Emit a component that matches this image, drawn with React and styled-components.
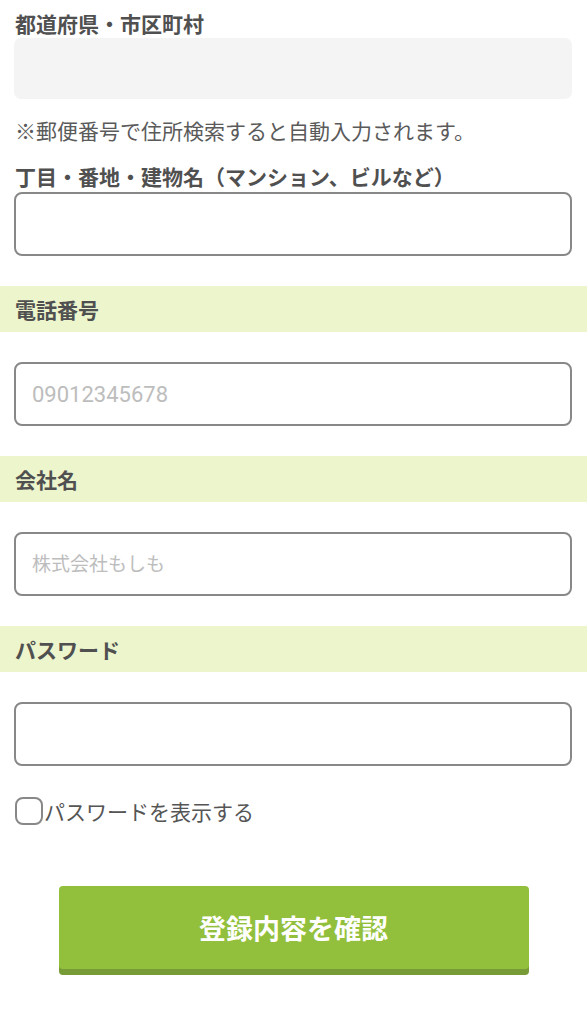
import styled, { createGlobalStyle } from "styled-components";

const GlobalStyle = createGlobalStyle`
  body {
    margin: 0;
    background: #fff;
    font-family: "Noto Sans CJK JP", "Noto Sans", sans-serif;
    color: #505050;
  }
`;

const Form = styled.form`
  display: flex;
  flex-direction: column;
  padding: 10px 0 48px;
`;

const Field = styled.div`
  display: flex;
  flex-direction: column;
  padding: 0 15px 0 14px;
  margin-top: ${(p) => p.$top || 0}px;
`;

const Label = styled.label`
  font-size: 21px;
  font-weight: 700;
  line-height: 26px;
  color: #505050;
  padding-left: 1px;
  margin-bottom: ${(p) => p.$gap || 0}px;
`;

const ReadonlyBox = styled.div`
  height: 61px;
  background: #f4f4f4;
  border-radius: 7px;
`;

const Note = styled.p`
  margin: 18px 0 0;
  padding-left: 1px;
  font-size: 21px;
  line-height: 26px;
  color: #5a5a5a;
`;

const Band = styled.div`
  display: flex;
  align-items: center;
  height: 46px;
  margin-top: 30px;
  padding-left: 15px;
  background: #edf5cc;
  font-size: 21px;
  font-weight: 700;
  color: #505050;
`;

const Input = styled.input`
  box-sizing: border-box;
  width: 100%;
  height: 64px;
  margin-top: ${(p) => p.$top || 0}px;
  padding: 0 16px;
  border: 2px solid #888;
  border-radius: 8px;
  background: #fff;
  font-family: "Roboto", "Noto Sans CJK JP", sans-serif;
  font-size: ${(p) => (p.$digits ? 22 : 19)}px;
  color: #333;
  outline: none;

  &::placeholder {
    color: #bdbdbd;
  }
`;

const CheckRow = styled.label`
  display: flex;
  align-items: center;
  margin: 31px 0 0 15px;
  font-size: 21px;
  line-height: 28px;
  color: #555;
`;

const Check = styled.input`
  appearance: none;
  box-sizing: border-box;
  width: 28px;
  height: 28px;
  margin: 0 1px 0 0;
  border: 2px solid #888;
  border-radius: 8px;
  background: #fff;
`;

const Submit = styled.button`
  align-self: center;
  width: 470px;
  height: 83px;
  margin-top: 61px;
  border: none;
  border-radius: 4px;
  background: #93c03c;
  box-shadow: 0 6px 0 #779b36;
  font-family: "Noto Sans CJK JP", sans-serif;
  font-size: 27px;
  font-weight: 700;
  color: #fff;
  cursor: pointer;
`;

export default function App() {
  return (
    <>
      <GlobalStyle />
      <Form onSubmit={(e) => e.preventDefault()}>
        <Field>
          <Label $gap={2}>都道府県・市区町村</Label>
          <ReadonlyBox />
          <Note>※郵便番号で住所検索すると自動入力されます。</Note>
        </Field>

        <Field $top={20}>
          <Label $gap={3}>丁目・番地・建物名（マンション、ビルなど）</Label>
          <Input type="text" />
        </Field>

        <Band>電話番号</Band>
        <Field>
          <Input type="tel" $top={30} $digits placeholder="09012345678" />
        </Field>

        <Band>会社名</Band>
        <Field>
          <Input type="text" $top={30} placeholder="株式会社もしも" />
        </Field>

        <Band>パスワード</Band>
        <Field>
          <Input type="password" $top={30} />
        </Field>

        <CheckRow>
          <Check type="checkbox" />
          パスワードを表示する
        </CheckRow>

        <Submit type="submit">登録内容を確認</Submit>
      </Form>
    </>
  );
}
